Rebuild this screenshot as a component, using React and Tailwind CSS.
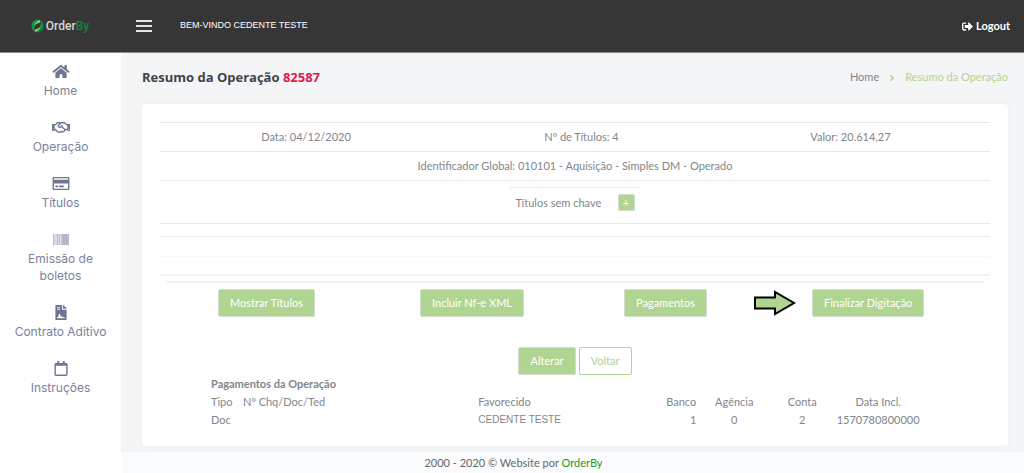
import React from "react";
import {
  FaHome,
  FaRegHandshake,
  FaRegCreditCard,
  FaBarcode,
  FaRegCalendar,
  FaSignOutAlt,
  FaAngleRight,
} from "react-icons/fa";

const menuItems = [
  { name: "Home", icon: FaHome },
  { name: "Operação", icon: FaRegHandshake },
  { name: "Títulos", icon: FaRegCreditCard },
  { name: "Emissão de boletos", icon: FaBarcode },
  { name: "Contrato Aditivo", icon: ContractIcon },
  { name: "Instruções", icon: FaRegCalendar },
];

const btn =
  "h-7 px-[11px] rounded-xs border border-[#d3dccb] bg-[#b0d592] text-white whitespace-nowrap";

function ContractIcon({ className }) {
  return (
    <svg viewBox="0 0 384 512" width="1em" height="1em" fill="currentColor" className={className}>
      <path
        fillRule="evenodd"
        d="M24 0h200v136c0 13 11 24 24 24h136v328c0 13-11 24-24 24H24c-13 0-24-11-24-24V24C0 11 11 0 24 0zM64 64v32h96V64zm0 64v32h96v-32zM64 416v32h256v-32h-60c-14 0-20-8-28-20-14-24-38-24-50-4l-24-84c-6-18-30-18-36 0l-24 84c-4 12-12 20-34 20z"
      />
      <path d="M256 0v128h128v-7c0-6-3-12-7-17L280 7c-4-4-11-7-17-7z" />
    </svg>
  );
}

function Logo() {
  return (
    <a href="#home" className="flex w-[120px] shrink-0 items-center justify-center gap-[2px]">
      <svg viewBox="0 0 26 28" className="h-[14px] w-[13px]">
        <path d="M14 1C6 1 1 7 1 14c0 5 2 9 6 11-1-3-1-6 0-9 1-6 5-11 10-14-1-1-2-1-3-1z" fill="#0b9a47" />
        <path d="M12 27c8 0 13-6 13-13 0-5-2-9-6-11 1 3 1 6 0 9-1 6-5 11-10 14 1 1 2 1 3 1z" fill="#0b8a3f" />
        <path d="M18 2C11 4 7 9 6 16c1-4 5-8 12-9 1-2 1-3 0-5z" fill="#8ccf7c" />
        <path d="M8 26c7-2 11-7 12-14-1 4-5 8-12 9-1 2-1 3 0 5z" fill="#8ccf7c" />
      </svg>
      <span className="font-['Roboto'] text-xs font-medium text-[#d6d6d6]">
        Order<span className="text-[#0b8a3f]">By</span>
      </span>
    </a>
  );
}

function Header() {
  return (
    <header className="flex h-[53px] items-center border-b border-[#8a8a8a] bg-[#363636] text-white">
      <Logo />
      <button aria-label="Menu" className="ml-4 flex w-4 flex-col gap-[3px]">
        <span className="h-[2px] w-full bg-[#e4e4e4]" />
        <span className="h-[2px] w-full bg-[#e4e4e4]" />
        <span className="h-[2px] w-full bg-[#e4e4e4]" />
      </button>
      <span className="ml-7 font-['Liberation_Sans'] text-[9px]">BEM-VINDO CEDENTE TESTE</span>
      <a href="#logout" className="mr-[14px] ml-auto flex items-center gap-[3px] font-bold">
        <FaSignOutAlt />
        Logout
      </a>
    </header>
  );
}

function Sidebar() {
  return (
    <nav className="flex w-[121px] shrink-0 flex-col gap-[21px] bg-white px-3 pt-[11px] font-['Inter'] text-xs text-[#7a819c]">
      {menuItems.map((item) => (
        <a key={item.name} href="#menu" className="flex flex-col items-center text-center leading-[17px]">
          <item.icon className="mb-[3px] h-[15px] w-[18px] text-[#6e7693]" />
          {item.name}
        </a>
      ))}
    </nav>
  );
}

function Arrow() {
  return (
    <svg viewBox="0 0 42 26" className="h-[26px] w-[42px] shrink-0">
      <path d="M1 7.500h20V2l19 11-19 11v-5.500H1z" fill="#b0d592" stroke="#000" strokeWidth="2" />
    </svg>
  );
}

function Payments() {
  return (
    <table className="w-full table-fixed leading-[18px]">
      <caption className="text-left font-bold">Pagamentos da Operação</caption>
      <colgroup>
        <col className="w-8" />
        <col className="w-[33%]" />
        <col className="w-[23%]" />
        <col className="w-[54px]" />
        <col className="w-[76px]" />
        <col className="w-[60px]" />
        <col />
      </colgroup>
      <thead>
        <tr className="[&>th]:p-0 [&>th]:font-normal">
          <th className="text-left">Tipo</th>
          <th className="text-left">Nº Chq/Doc/Ted</th>
          <th className="text-left">Favorecido</th>
          <th className="text-right">Banco</th>
          <th>Agência</th>
          <th>Conta</th>
          <th>Data Incl.</th>
        </tr>
      </thead>
      <tbody>
        <tr className="[&>td]:p-0">
          <td>Doc</td>
          <td />
          <td className="font-['Liberation_Sans'] text-[10px]">CEDENTE TESTE</td>
          <td className="text-right">1</td>
          <td className="text-center">0</td>
          <td className="text-center">2</td>
          <td className="text-center">1570780800000</td>
        </tr>
      </tbody>
    </table>
  );
}

export default function App() {
  return (
    <div className="flex min-h-screen flex-col bg-[#f4f5f7] font-['Lato',sans-serif] text-[11px] text-[#7f868c]">
      <Header />
      <div className="flex flex-1">
        <Sidebar />
        <div className="flex min-w-0 flex-1 flex-col">
          <main className="flex-1 pr-4 pb-[6px] pl-[21px]">
            <div className="flex h-[51px] items-center justify-between pb-[2px]">
              <h1 className="font-['Open_Sans'] text-[13px] font-bold text-[#3d444b]">
                Resumo da Operação <span className="text-[#e01b50]">82587</span>
              </h1>
              <div className="flex items-center gap-2">
                <a href="#home">Home</a>
                <FaAngleRight className="text-[10px] text-[#b0d592]" />
                <span className="text-[#b0d592]">Resumo da Operação</span>
              </div>
            </div>

            <section className="rounded-sm bg-white px-[18px] pt-[18px] pb-[17px] shadow-[0_0_12px_rgba(0,0,0,0.03)]">
              <div className="grid grid-cols-[292fr_259fr_279fr] border-t border-[#e6e8ea] text-center leading-7">
                <span>Data: 04/12/2020</span>
                <span>Nº de Títulos: 4</span>
                <span>Valor: 20.614,27</span>
              </div>
              <div className="border-y border-[#e6e8ea] text-center leading-7">
                Identificador Global: 010101 - Aquisição - Simples DM - Operado
              </div>
              {/* Títulos sem chave */}
              <div className="mx-auto mt-[6px] flex w-[131px] items-start justify-between border-t border-[#e6e8ea] px-[6px] pt-[6px] whitespace-nowrap">
                <span className="leading-[17px]">Títulos sem chave</span>
                <button className="h-[17px] w-[17px] rounded-xs border border-[#d3dccb] bg-[#b0d592] leading-none text-white">
                  +
                </button>
              </div>
              <div className="mt-3 h-[14px] border-y border-[#e9eaeb]" />
              <div className="h-5 border-b border-[#f8f8f8]" />
              <div className="h-[19px] border-b-2 border-[#f1f2f3]" />

              <div className="mx-[6px] mt-[5px] grid grid-cols-[201fr_210fr_177fr_230fr] border-t-2 border-[#f1f2f3] pt-[6px]">
                <div className="text-center">
                  <button className={btn}>Mostrar Títulos</button>
                </div>
                <div className="text-center">
                  <button className={btn}>Incluir Nf-e XML</button>
                </div>
                <div className="text-center">
                  <button className={btn}>Pagamentos</button>
                </div>
                <div className="flex items-center gap-4">
                  <Arrow />
                  <button className={btn}>Finalizar Digitação</button>
                </div>
              </div>

              <div className="mt-[30px] flex justify-center gap-[3px]">
                <button className={btn}>Alterar</button>
                <button className="h-7 rounded-xs border border-[#b0d592] bg-white px-[11px] text-[#b0d592]">
                  Voltar
                </button>
              </div>
              <div className="pr-[66px] pl-[51px]">
                <Payments />
              </div>
            </section>
          </main>

          <footer className="bg-[#fafbfc] pr-[118px] text-center leading-[21px] text-[#666]">
            2000 - 2020 © Website por{" "}
            <a href="#orderby" className="text-[#279a2c]">
              OrderBy
            </a>
          </footer>
        </div>
      </div>
    </div>
  );
}
